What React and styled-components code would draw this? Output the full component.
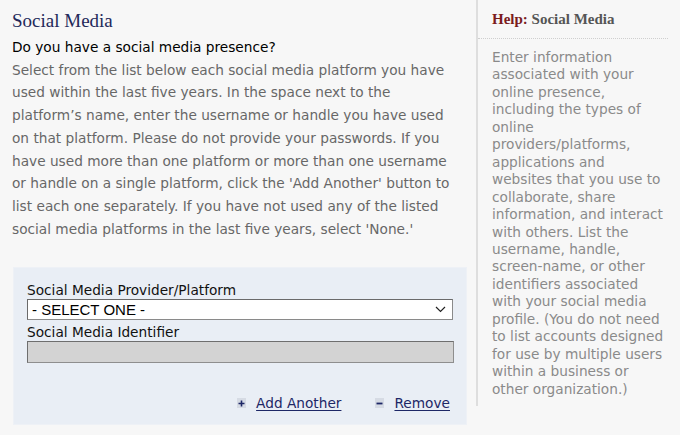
import React from "react";
import styled, { createGlobalStyle } from "styled-components";

const GlobalStyle = createGlobalStyle`
  body {
    margin: 0;
    background: #f7f7f7;
    font-family: "DejaVu Sans", Verdana, sans-serif;
  }
`;

const Page = styled.div`
  display: flex;
  align-items: flex-start;
  width: 680px;
  height: 435px;
  overflow: hidden;
`;

const Main = styled.div`
  width: 452px;
  padding: 9px 12px 0 12px;
`;

const Title = styled.h2`
  margin: 0;
  font-family: "Liberation Serif", "Times New Roman", serif;
  font-weight: normal;
  font-size: 19px;
  line-height: 24px;
  color: #23295a;
`;

const Question = styled.p`
  margin: 3px 0 0;
  font-size: 13.7px;
  line-height: 22.7px;
  color: #000;
`;

const Intro = styled.p`
  margin: 0;
  font-size: 13.7px;
  line-height: 22.7px;
  color: #676767;
  white-space: nowrap;
`;

const EntryBox = styled.div`
  margin: 27px 0 0 1px;
  width: 454px;
  box-sizing: border-box;
  padding: 14px 14px 12px 13px;
  background: #e9eef5;
  border: 1px solid #eef1f6;
`;

const FieldLabel = styled.label`
  display: block;
  font-size: 13.7px;
  line-height: 17px;
  color: #111;
`;

const SelectBox = styled.div`
  display: flex;
  align-items: center;
  justify-content: space-between;
  height: 21px;
  width: 426px;
  box-sizing: border-box;
  margin: 0 0 4px;
  padding: 0 6px 0 4px;
  background: #fff;
  border: 1px solid #8a8a8a;
  border-top-color: #6a6a6a;
  border-left-color: #6a6a6a;
  font-family: "Liberation Sans", Arial, sans-serif;
  font-size: 15px;
  color: #000;
`;

const TextField = styled.div`
  height: 22px;
  width: 427px;
  box-sizing: border-box;
  background: #d3d3d3;
  border: 1px solid #8e8e8e;
  border-top-color: #6e6e6e;
  border-left-color: #6e6e6e;
`;

const Actions = styled.div`
  display: flex;
  justify-content: flex-end;
  gap: 34px;
  margin-top: 31px;
  padding-right: 2px;
`;

const ActionLink = styled.a`
  display: flex;
  align-items: center;
  gap: 10px;
  font-size: 13.7px;
  line-height: 18px;
  color: #1d2766;
  text-decoration: underline;
  text-underline-offset: 2px;
  cursor: pointer;
`;

const ActionIcon = styled.span`
  display: inline-flex;
  align-items: center;
  justify-content: center;
  width: 9px;
  height: 10px;
  background: #d6dbe4;
`;

const Help = styled.aside`
  width: 190px;
  height: 406px;
  border-left: 2px solid #dedede;
`;

const HelpTitle = styled.h3`
  margin: 0;
  padding: 10px 0 9px 14px;
  border-bottom: 1px dotted #cfcfcf;
  font-family: "Liberation Serif", "Times New Roman", serif;
  font-size: 15px;
  line-height: 19px;
  color: #555;
`;

const HelpKey = styled.span`
  color: #7b1c1c;
`;

const HelpText = styled.p`
  margin: 0;
  padding: 10px 0 0 14px;
  font-size: 13.7px;
  line-height: 17.45px;
  color: #8a8a8a;
  white-space: nowrap;
`;

const introLines = [
  "Select from the list below each social media platform you have",
  "used within the last five years. In the space next to the",
  "platform’s name, enter the username or handle you have used",
  "on that platform. Please do not provide your passwords. If you",
  "have used more than one platform or more than one username",
  "or handle on a single platform, click the 'Add Another' button to",
  "list each one separately. If you have not used any of the listed",
  "social media platforms in the last five years, select 'None.'",
];

const helpLines = [
  "Enter information",
  "associated with your",
  "online presence,",
  "including the types of",
  "online",
  "providers/platforms,",
  "applications and",
  "websites that you use to",
  "collaborate, share",
  "information, and interact",
  "with others. List the",
  "username, handle,",
  "screen-name, or other",
  "identifiers associated",
  "with your social media",
  "profile. (You do not need",
  "to list accounts designed",
  "for use by multiple users",
  "within a business or",
  "other organization.)",
];

const withBreaks = (lines) =>
  lines.map((line, i) => (
    <React.Fragment key={i}>
      {line}
      {i < lines.length - 1 && <br />}
    </React.Fragment>
  ));

const Chevron = () => (
  <svg width="11" height="7" viewBox="0 0 11 7">
    <path d="M1 1l4.5 4.5L10 1" fill="none" stroke="#222" strokeWidth="1.2" />
  </svg>
);

const PlusIcon = () => (
  <ActionIcon>
    <svg width="7" height="7" viewBox="0 0 7 7">
      <path d="M3.5 0.5v6M0.5 3.5h6" stroke="#1d2766" strokeWidth="1.6" />
    </svg>
  </ActionIcon>
);

const MinusIcon = () => (
  <ActionIcon>
    <svg width="7" height="7" viewBox="0 0 7 7">
      <path d="M0.5 3.5h6" stroke="#1d2766" strokeWidth="1.8" />
    </svg>
  </ActionIcon>
);

export default function App() {
  return (
    <>
      <GlobalStyle />
      <Page>
        <Main>
          <Title>Social Media</Title>
          <Question>Do you have a social media presence?</Question>
          <Intro>{withBreaks(introLines)}</Intro>
          <EntryBox>
            <FieldLabel>Social Media Provider/Platform</FieldLabel>
            <SelectBox>
              <span>- SELECT ONE -</span>
              <Chevron />
            </SelectBox>
            <FieldLabel>Social Media Identifier</FieldLabel>
            <TextField />
            <Actions>
              <ActionLink>
                <PlusIcon />
                Add Another
              </ActionLink>
              <ActionLink>
                <MinusIcon />
                Remove
              </ActionLink>
            </Actions>
          </EntryBox>
        </Main>
        <Help>
          <HelpTitle>
            <HelpKey>Help:</HelpKey> Social Media
          </HelpTitle>
          <HelpText>{withBreaks(helpLines)}</HelpText>
        </Help>
      </Page>
    </>
  );
}
